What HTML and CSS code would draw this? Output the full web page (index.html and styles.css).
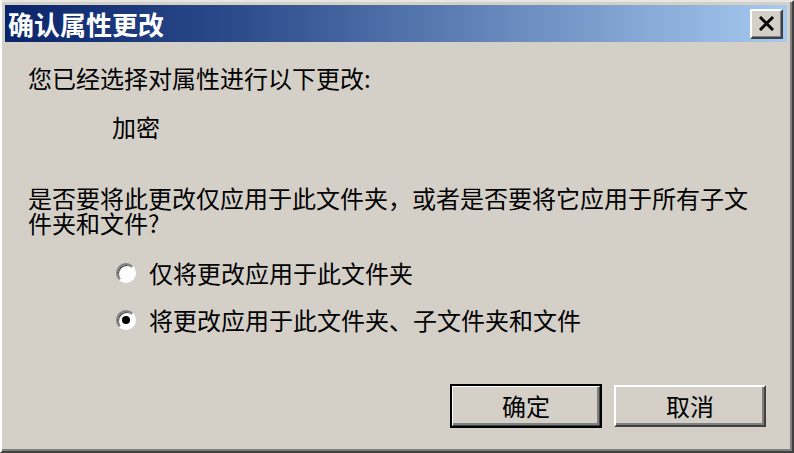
FILE: index.html
```html
<!DOCTYPE html>
<html lang="zh-CN">
  <head>
    <meta charset="UTF-8" />
    <title>确认属性更改</title>
    <link rel="stylesheet" href="styles.css">
  </head>
  <body>
    <div class="window">
      <div class="titlebar">
        <span class="title">确认属性更改</span>
        <button class="close-btn" aria-label="关闭">
          <svg width="17" height="15" viewBox="0 0 17 15">
            <path d="M2 1 L15 14 M15 1 L2 14" stroke="#000" stroke-width="3" />
          </svg>
        </button>
      </div>

      <div class="content">
        <p class="intro">您已经选择对属性进行以下更改:</p>
        <p class="change">加密</p>
        <p class="question">是否要将此更改仅应用于此文件夹，或者是否要将它应用于所有子文件夹和文件?</p>

        <div class="options">
          <label class="option">
            <span class="radio"></span>
            <span>仅将更改应用于此文件夹</span>
          </label>
          <label class="option">
            <span class="radio checked"></span>
            <span>将更改应用于此文件夹、子文件夹和文件</span>
          </label>
        </div>

        <div class="actions">
          <button class="btn default">确定</button>
          <button class="btn">取消</button>
        </div>
      </div>
    </div>
  </body>
</html>
```

FILE: styles.css
```css
html,
body {
  margin: 0;
  padding: 0;
  background: #d4d0c8;
}

body {
  font-family: "Noto Sans CJK SC", "DejaVu Sans", sans-serif;
  color: #000;
}

.window {
  width: 794px;
  height: 453px;
  box-sizing: border-box;
  background: #d4d0c8;
  border-top: 2px solid #e8e6e0;
  border-left: 2px solid #ffffff;
  border-right: 2px solid #404040;
  border-bottom: 2px solid #404040;
  box-shadow: inset -2px -2px 0 #808080;
  padding: 3px 5px 5px 3px;
  display: flex;
  flex-direction: column;
}

.titlebar {
  height: 37px;
  background: linear-gradient(to right, #0a246a 0%, #2c4c8c 30%, #a6caf0 100%);
  display: flex;
  align-items: center;
  justify-content: space-between;
  padding: 0 4px 0 3px;
}

.title {
  color: #fff;
  font-size: 26px;
  font-weight: bold;
  line-height: 37px;
}

.close-btn {
  width: 33px;
  height: 30px;
  padding: 0;
  background: #d4d0c8;
  border-top: 2px solid #fff;
  border-left: 2px solid #fff;
  border-right: 2px solid #404040;
  border-bottom: 2px solid #404040;
  box-shadow: inset -1px -1px 0 #808080;
  display: flex;
  align-items: center;
  justify-content: center;
}

.content {
  flex: 1;
  padding: 0 0 0 23px;
  display: flex;
  flex-direction: column;
  font-size: 24px;
}

.content p {
  margin: 0;
  line-height: 26px;
}

.intro {
  margin-top: 23px !important;
}

.change {
  margin-top: 23px !important;
  padding-left: 84px;
}

.question {
  margin-top: 45px !important;
  width: 726px;
  line-height: 25px !important;
}

.options {
  margin-top: 25px;
  padding-left: 88px;
  display: flex;
  flex-direction: column;
  gap: 21px;
}

.option {
  display: flex;
  align-items: center;
  gap: 13px;
  line-height: 26px;
}

.radio {
  width: 16px;
  height: 16px;
  border-radius: 50%;
  background: #fff;
  border: 2px solid;
  border-color: #808080 #ffffff #ffffff #808080;
  box-shadow: inset 1px 1px 0 #404040;
  position: relative;
}

.radio.checked::after {
  content: "";
  position: absolute;
  left: 4px;
  top: 4px;
  width: 8px;
  height: 8px;
  border-radius: 50%;
  background: #000;
}

.actions {
  margin-top: auto;
  margin-bottom: 19px;
  display: flex;
  justify-content: flex-end;
  gap: 13px;
  padding-right: 21px;
}

.btn {
  width: 152px;
  height: 42px;
  font-family: inherit;
  font-size: 24px;
  background: #d4d0c8;
  border-top: 2px solid #fff;
  border-left: 2px solid #fff;
  border-right: 2px solid #404040;
  border-bottom: 2px solid #404040;
  box-shadow: inset -2px -2px 0 #808080;
  padding: 0;
  line-height: 1;
}

.btn.default {
  outline: 2px solid #000;
  outline-offset: -1px;
  width: 150px;
}
```
